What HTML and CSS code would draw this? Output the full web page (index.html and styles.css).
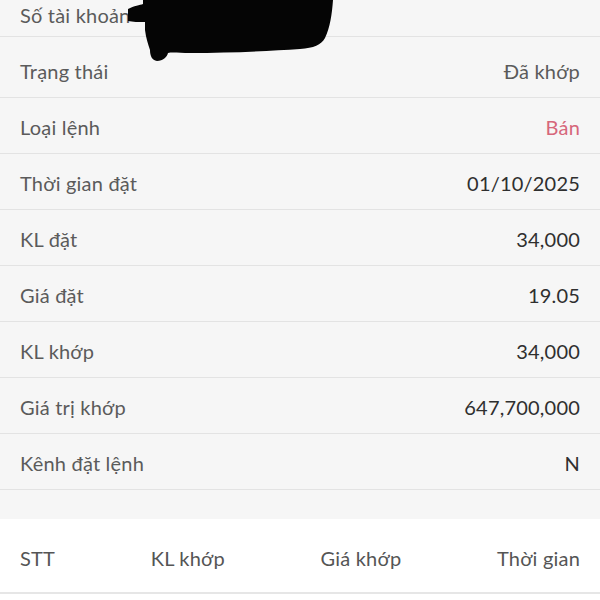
FILE: index.html
```html
<!DOCTYPE html>
<html>
<head>
    <meta charset="UTF-8">
    <title>Chi tiết lệnh</title>
    <link rel="stylesheet" href="styles.css">
</head>
<body>
    <div class="screen">
        <div class="detail-list">
            <div class="row row-first">
                <span class="label">Số tài khoản</span>
            </div>
            <div class="row row-tall">
                <span class="label">Trạng thái</span>
                <span class="value muted">Đã khớp</span>
            </div>
            <div class="row">
                <span class="label">Loại lệnh</span>
                <span class="value sell">Bán</span>
            </div>
            <div class="row">
                <span class="label">Thời gian đặt</span>
                <span class="value">01/10/2025</span>
            </div>
            <div class="row">
                <span class="label">KL đặt</span>
                <span class="value">34,000</span>
            </div>
            <div class="row">
                <span class="label">Giá đặt</span>
                <span class="value">19.05</span>
            </div>
            <div class="row">
                <span class="label">KL khớp</span>
                <span class="value">34,000</span>
            </div>
            <div class="row">
                <span class="label">Giá trị khớp</span>
                <span class="value">647,700,000</span>
            </div>
            <div class="row">
                <span class="label">Kênh đặt lệnh</span>
                <span class="value">N</span>
            </div>
        </div>

        <div class="spacer"></div>

        <!-- Bảng chi tiết khớp -->
        <div class="match-table">
            <div class="table-head">
                <span>STT</span>
                <span>KL khớp</span>
                <span>Giá khớp</span>
                <span>Thời gian</span>
            </div>
        </div>

        <!-- che số tài khoản -->
        <svg class="redact" width="340" height="70" viewBox="0 0 340 70">
            <path d="M128,9 C134,6 140,5 143,4 L143,0 L333,0 C332,14 330,28 325,38 C321,45 314,48 300,49 C270,51 230,53 190,53 C180,53 172,52 168,53 C167,57 163,61 157,61 C152,60 150,56 150,50 C148,44 146,38 145,30 L145,22 C138,22 133,22 128,21 Z" fill="#050505"/>
        </svg>
    </div>
</body>
</html>
```

FILE: styles.css
```css
* {
    box-sizing: border-box;
    margin: 0;
    padding: 0;
}
body {
    font-family: Lato, "Noto Sans", sans-serif;
    background-color: #fff;
    width: 600px;
    height: 600px;
    overflow: hidden;
}
.screen {
    position: relative;
    width: 600px;
    height: 600px;
    overflow: hidden;
}
.detail-list {
    background-color: #f6f6f6;
    margin-top: -19px;
}
.row {
    display: flex;
    justify-content: space-between;
    align-items: center;
    height: 56px;
    padding: 2px 20px 0;
    border-bottom: 1px solid #e3e3e3;
    font-size: 20px;
    letter-spacing: 0.2px;
}
.row-first {
    padding-top: 12px;
}
.row-tall {
    height: 61px;
    padding-top: 7px;
}
.label {
    color: #5b5b5b;
}
.value {
    color: #2f2f2f;
}
.value.muted {
    color: #5b5b5b;
}
.value.sell {
    color: #d6677b;
}
.spacer {
    height: 29px;
    background-color: #f6f6f6;
}
.match-table {
    background-color: #fff;
}
.table-head {
    display: flex;
    justify-content: space-between;
    align-items: center;
    height: 75px;
    padding: 4px 20px 0;
    border-bottom: 2px solid #e6e6e6;
    font-size: 20px;
    letter-spacing: 0.2px;
    color: #555;
}
.redact {
    position: absolute;
    top: 0;
    left: 0;
}
```
